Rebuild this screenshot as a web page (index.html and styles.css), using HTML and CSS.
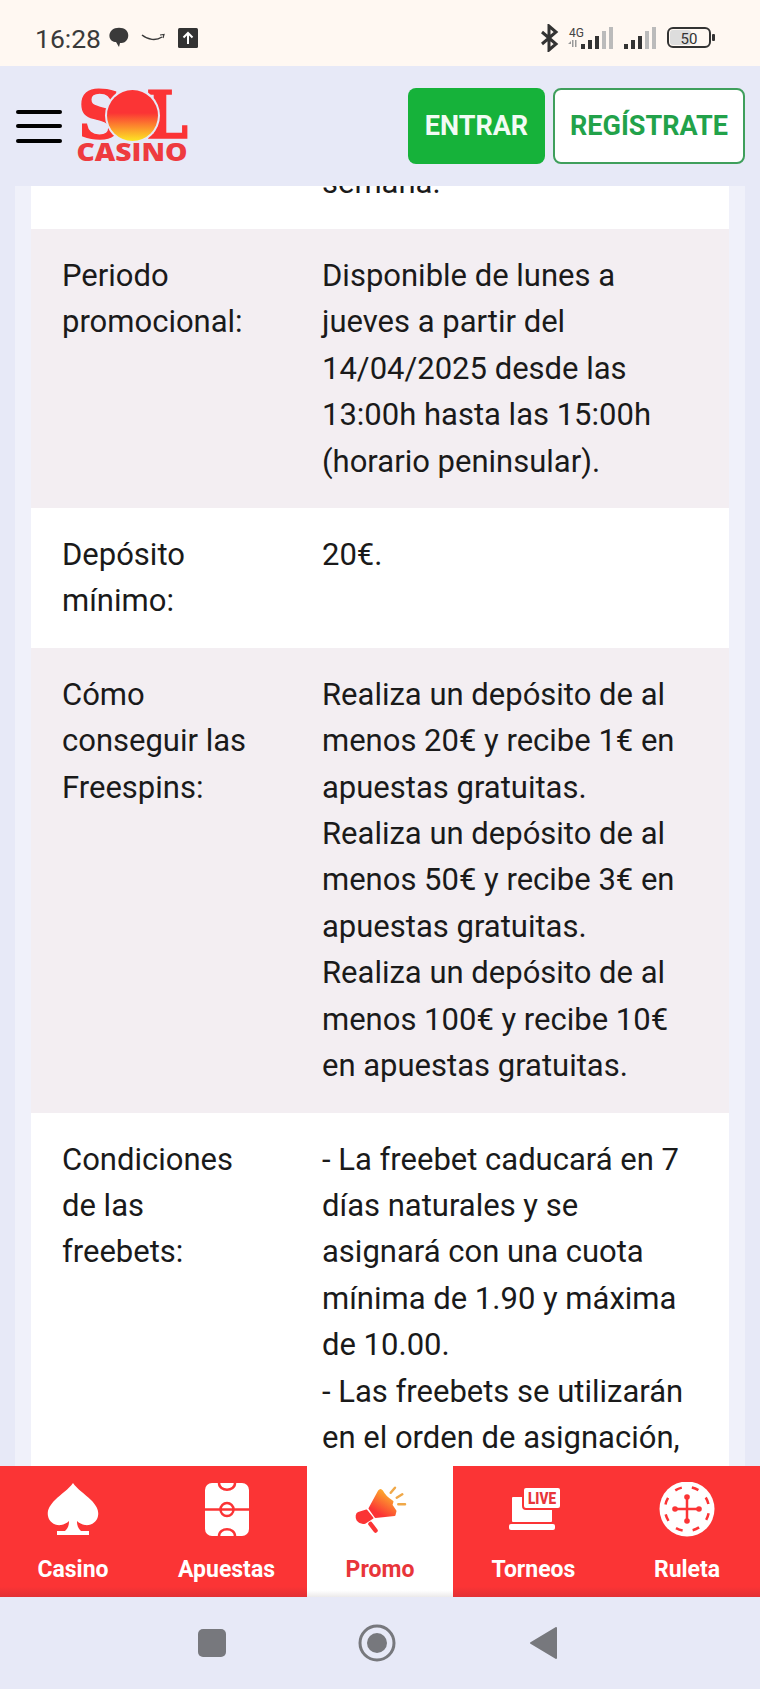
FILE: index.html
```html
<!DOCTYPE html>
<html lang="es">
<head>
    <meta charset="UTF-8">
    <meta name="viewport" content="width=device-width, initial-scale=1.0">
    <title>Sol Casino</title>
    <link rel="stylesheet" href="styles.css">
</head>
<body>
    <div class="status-bar">
        <span class="clock">16:28</span>
        <svg class="st-chat" width="21" height="22" viewBox="0 0 21 22"><path fill="#3a3a3a" d="M4 3C7 0 15 0 18 3c3 3 3 8 0 11-2 2-4 2-6 2l-1 4-3-5C5 15 2 13 1.500 10 1 7 2 5 4 3z"/></svg>
        <svg class="st-smile" width="25" height="10" viewBox="0 0 25 10"><path fill="none" stroke="#3a3a3a" stroke-width="1.500" d="M1 2c6 5 14 6 20 2"/><path fill="none" stroke="#3a3a3a" stroke-width="1.200" d="M19 2l4-.5-1 3.500"/></svg>
        <svg class="st-up" width="20" height="20" viewBox="0 0 20 20"><rect width="20" height="20" rx="1.500" fill="#333"/><path fill="none" stroke="#fff" stroke-width="2" d="M10 16V5M5.500 9.500L10 5l4.500 4.500"/></svg>
        <div class="status-right">
            <svg width="19" height="28" viewBox="0 0 19 28"><path fill="none" stroke="#333" stroke-width="3" d="M2 8l14 12-7 6V2l7 6L2 20"/></svg>
            <svg class="st-signal" width="47" height="24" viewBox="0 0 47 24">
                <text x="1" y="11" class="st-4g">4G</text>
                <path fill="#999" d="M0 18h3v-3zM4 14h1.500v7H4zM7 14h1.500v7H7z"/>
                <rect x="13" y="18" width="4" height="5" fill="#333"/><rect x="20" y="14" width="4" height="9" fill="#333"/><rect x="27" y="10" width="4" height="13" fill="#333"/><rect x="34" y="5" width="4" height="18" fill="#bbb"/><rect x="41" y="1" width="4" height="22" fill="#bbb"/>
            </svg>
            <svg width="34" height="24" viewBox="0 0 34 24">
                <rect x="0" y="18" width="4" height="5" fill="#333"/><rect x="7" y="14" width="4" height="9" fill="#333"/><rect x="14" y="10" width="4" height="13" fill="#333"/><rect x="21" y="5" width="4" height="18" fill="#bbb"/><rect x="28" y="1" width="4" height="22" fill="#bbb"/>
            </svg>
            <svg width="49" height="22" viewBox="0 0 49 22">
                <rect x="1" y="1" width="42" height="19" rx="5" fill="#fff8f2" stroke="#333" stroke-width="2"/>
                <rect x="3" y="3" width="21" height="15" rx="3" fill="#ddd"/>
                <text x="22" y="16.500" text-anchor="middle" class="st-batt">50</text>
                <rect x="45" y="7" width="3" height="7" rx="1" fill="#333"/>
            </svg>
        </div>
    </div>

    <header class="top-bar">
        <div class="burger"><span></span><span></span><span></span></div>
        <svg class="logo" width="110" height="74" viewBox="0 0 110 74">
            <defs>
                <linearGradient id="sun" x1="0" y1="0" x2="0" y2="1">
                    <stop offset="0.45" stop-color="#fb3435"/>
                    <stop offset="1" stop-color="#fde624"/>
                </linearGradient>
            </defs>
            <text x="0" y="49" class="logo-s" textLength="44" lengthAdjust="spacingAndGlyphs">S</text>
            <text x="68" y="49" class="logo-l" textLength="42" lengthAdjust="spacingAndGlyphs">L</text>
            <circle cx="54.500" cy="26.500" r="27.500" fill="#e7e9f7"/>
            <circle cx="54.500" cy="26.500" r="25.500" fill="url(#sun)"/>
            <text x="-1.500" y="72" class="logo-casino" textLength="111" lengthAdjust="spacingAndGlyphs">CASINO</text>
        </svg>
        <div class="auth">
            <a class="btn btn-enter">ENTRAR</a>
            <a class="btn btn-register">REGÍSTRATE</a>
        </div>
    </header>

    <main class="content">
        <div class="panel">
            <table class="promo-table">
                <tr>
                    <td></td>
                    <td>semana.</td>
                </tr>
                <tr class="alt">
                    <td>Periodo promocional:</td>
                    <td>Disponible de lunes a jueves a partir del 14/04/2025 desde las 13:00h hasta las 15:00h (horario peninsular).</td>
                </tr>
                <tr>
                    <td>Depósito mínimo:</td>
                    <td>20€.</td>
                </tr>
                <tr class="alt">
                    <td>Cómo conseguir las Freespins:</td>
                    <td>Realiza un depósito de al menos 20€ y recibe 1€ en apuestas gratuitas.<br>Realiza un depósito de al menos 50€ y recibe 3€ en apuestas gratuitas.<br>Realiza un depósito de al menos 100€ y recibe 10€ en apuestas gratuitas.</td>
                </tr>
                <tr>
                    <td>Condiciones de las freebets:</td>
                    <td>- La freebet caducará en 7 días naturales y se asignará con una cuota mínima de 1.90 y máxima de 10.00.<br>- Las freebets se utilizarán en el orden de asignación,</td>
                </tr>
            </table>
        </div>
    </main>

    <nav class="tabs">
        <a class="tab">
            <svg width="52" height="56" viewBox="0 0 52 56"><path fill="#fff" d="M26 1C30 7 38 12 44 18c6 6 8 11 7 16-1 6-7 10-13 9-3-.5-6-2-8-4 0 6 2 8 4 10h-16c2-2 4-4 4-10-2 2-5 3.500-8 4C8 44 2 40 1 34c-1-5 1-10 7-16C14 12 22 7 26 1z"/><rect x="10" y="49" width="32" height="4" fill="#fff"/></svg>
            <span>Casino</span>
        </a>
        <a class="tab">
            <svg width="44" height="56" viewBox="0 0 44 56"><rect x="0" y="1" width="44" height="53" rx="7" fill="#fff"/><g fill="none" stroke="#fb3435" stroke-width="2.500"><path d="M0 27.500h44"/><circle cx="22" cy="27.500" r="6.500"/><path d="M14 1c0 9 16 9 16 0M14 54c0-9 16-9 16 0"/></g></svg>
            <span>Apuestas</span>
        </a>
        <a class="tab active">
            <svg width="56" height="56" viewBox="0 0 56 56">
                <defs>
                    <linearGradient id="horn" x1="0" y1="1" x2="0.600" y2="0">
                        <stop offset="0.25" stop-color="#fb3435"/>
                        <stop offset="1" stop-color="#fdb02c"/>
                    </linearGradient>
                </defs>
                <path fill="url(#horn)" stroke="url(#horn)" stroke-width="2" stroke-linejoin="round" d="M17.500 26.500L27 9c1-1.500 2-1.500 3 0 2 4 6 8 10.500 10.500l-1 3.500 4 6-1 4-19 2z"/>
                <path fill="#fb3435" stroke="#fb3435" stroke-width="2" stroke-linejoin="round" d="M14.500 28.500l6 7.500-7 4.500c-3 1-6 0-8-2.500-1.500-3-1-6 1-7z"/>
                <path d="M18.500 42l5 6.500" stroke="#fb3435" stroke-width="4.500" stroke-linecap="round"/>
                <path d="M38.700 10.700L43 5.700M44.700 15.700l5.600-3.400M46.300 22.300H53" stroke="#f0a848" stroke-width="2.500" stroke-linecap="round"/>
            </svg>
            <span>Promo</span>
        </a>
        <a class="tab">
            <svg width="52" height="56" viewBox="0 0 52 56">
                <rect x="4" y="15" width="40" height="25" rx="1" fill="#fff"/>
                <rect x="1" y="42" width="46" height="6" rx="2" fill="#fff"/>
                <rect x="15" y="5" width="38" height="22" rx="3" fill="#fff" stroke="#fb3435" stroke-width="2"/>
                <text x="20" y="22" class="live" textLength="28" lengthAdjust="spacingAndGlyphs">LIVE</text>
            </svg>
            <span>Torneos</span>
        </a>
        <a class="tab">
            <svg width="56" height="56" viewBox="0 0 56 56">
                <circle cx="28" cy="27" r="27.500" fill="#fff"/>
                <circle cx="28" cy="27" r="22" fill="none" stroke="#fb3435" stroke-width="2.500" stroke-dasharray="7 10.280" stroke-dashoffset="13"/>
                <path d="M28 15v24M16 27h24" stroke="#fb3435" stroke-width="2.500"/>
                <g fill="#fb3435"><circle cx="28" cy="15" r="2.800"/><circle cx="28" cy="39" r="2.800"/><circle cx="16" cy="27" r="2.800"/><circle cx="40" cy="27" r="2.800"/></g>
            </svg>
            <span>Ruleta</span>
        </a>
    </nav>

    <div class="sys-nav">
        <span class="sys-square"></span>
        <svg width="38" height="38" viewBox="0 0 38 38"><circle cx="19" cy="19" r="17" fill="none" stroke="#77787d" stroke-width="3"/><circle cx="19" cy="19" r="10" fill="#77787d"/></svg>
        <svg width="27" height="32" viewBox="0 0 27 32"><path fill="#77787d" stroke="#77787d" stroke-width="2" stroke-linejoin="round" d="M26 1v30L1 16z"/></svg>
    </div>
</body>
</html>
```
FILE: styles.css
```css
* {
    box-sizing: border-box;
}
body {
    margin: 0;
    height: 1689px;
    display: flex;
    flex-direction: column;
    overflow: hidden;
    font-family: Roboto, "Liberation Sans", sans-serif;
    background-color: #e7e9f7;
    color: #1a1a1a;
}

/* phone status bar */
.status-bar {
    height: 66px;
    flex: none;
    display: flex;
    align-items: center;
    padding: 10px 44px 0 35px;
    background-color: #fff8f2;
}
.clock {
    font-size: 26.500px;
    color: #3a3a3a;
}
.st-chat {
    margin-left: 7px;
}
.st-smile {
    margin-left: 12px;
}
.st-up {
    margin-left: 12px;
}
.status-right {
    margin-left: auto;
    display: flex;
    align-items: center;
    gap: 9px;
}
.st-4g {
    font-size: 12px;
    fill: #444;
}
.st-batt {
    font-size: 15px;
    fill: #333;
}

/* header */
.top-bar {
    height: 120px;
    flex: none;
    display: flex;
    align-items: center;
    padding: 0 15px 0 16px;
    background-color: #e7e9f7;
}
.burger {
    width: 46px;
    display: flex;
    flex-direction: column;
    gap: 10.500px;
}
.burger span {
    height: 4px;
    border-radius: 2px;
    background-color: #000;
}
.logo {
    margin-left: 16px;
    overflow: visible;
}
.logo-s, .logo-l {
    font-family: "DejaVu Serif", serif;
    font-weight: bold;
    font-size: 66px;
    fill: #fb3435;
    stroke: #fb3435;
    stroke-width: 1.500px;
}
.logo-casino {
    font-family: "Open Sans", sans-serif;
    font-weight: 800;
    font-size: 25px;
    fill: #ee3b3f;
}
.auth {
    margin-left: auto;
    display: flex;
    gap: 8px;
}
.btn {
    height: 76px;
    display: flex;
    align-items: center;
    justify-content: center;
    border-radius: 8px;
    font-size: 27px;
    font-weight: 700;
}
.btn-enter {
    width: 137px;
    background-color: #16b23a;
    color: #f2fbf4;
}
.btn-register {
    width: 192px;
    background-color: #fff;
    border: 2px solid #3f9f5c;
    color: #22a24a;
}

/* promo terms */
.content {
    flex: 1;
    min-height: 0;
    overflow: hidden;
    padding: 0 15px;
}
.panel {
    height: 100%;
    overflow: hidden;
    padding: 0 16px;
    background-color: #f0f1fa;
}
.promo-table {
    width: 698px;
    margin-top: -50.400px;
    border-collapse: collapse;
    table-layout: fixed;
    background-color: #fff;
    font-size: 31px;
    line-height: 46.400px;
}
.promo-table td {
    padding: 24px 31px 23px;
    vertical-align: top;
}
.promo-table td:first-child {
    width: 291px;
    padding-right: 60px;
}
.promo-table td:last-child {
    padding-left: 0;
    padding-right: 38px;
}
.promo-table .alt {
    background-color: #f3eef2;
}

/* bottom tabs */
.tabs {
    height: 131px;
    flex: none;
    display: flex;
    justify-content: space-between;
    background: linear-gradient(#fb3435 92%, #e33034);
}
.tab {
    width: 146px;
    display: flex;
    flex-direction: column;
    align-items: center;
    padding-top: 16px;
    color: #fff;
    font-size: 23px;
    font-weight: 700;
}
.tab span {
    margin-top: 18px;
}
.tab.active {
    background: linear-gradient(#fff 95%, #eceaea);
    color: #e8353a;
}
.live {
    font-family: Roboto, sans-serif;
    font-weight: 900;
    font-size: 17px;
    fill: #e8353a;
}

/* android nav */
.sys-nav {
    height: 92px;
    flex: none;
    display: flex;
    align-items: center;
    justify-content: center;
    padding-right: 6px;
}
.sys-square {
    width: 28px;
    height: 28px;
    border-radius: 5px;
    background-color: #77787d;
}
.sys-nav svg:nth-of-type(1) {
    margin-left: 132px;
}
.sys-nav svg:nth-of-type(2) {
    margin-left: 134px;
}
```
